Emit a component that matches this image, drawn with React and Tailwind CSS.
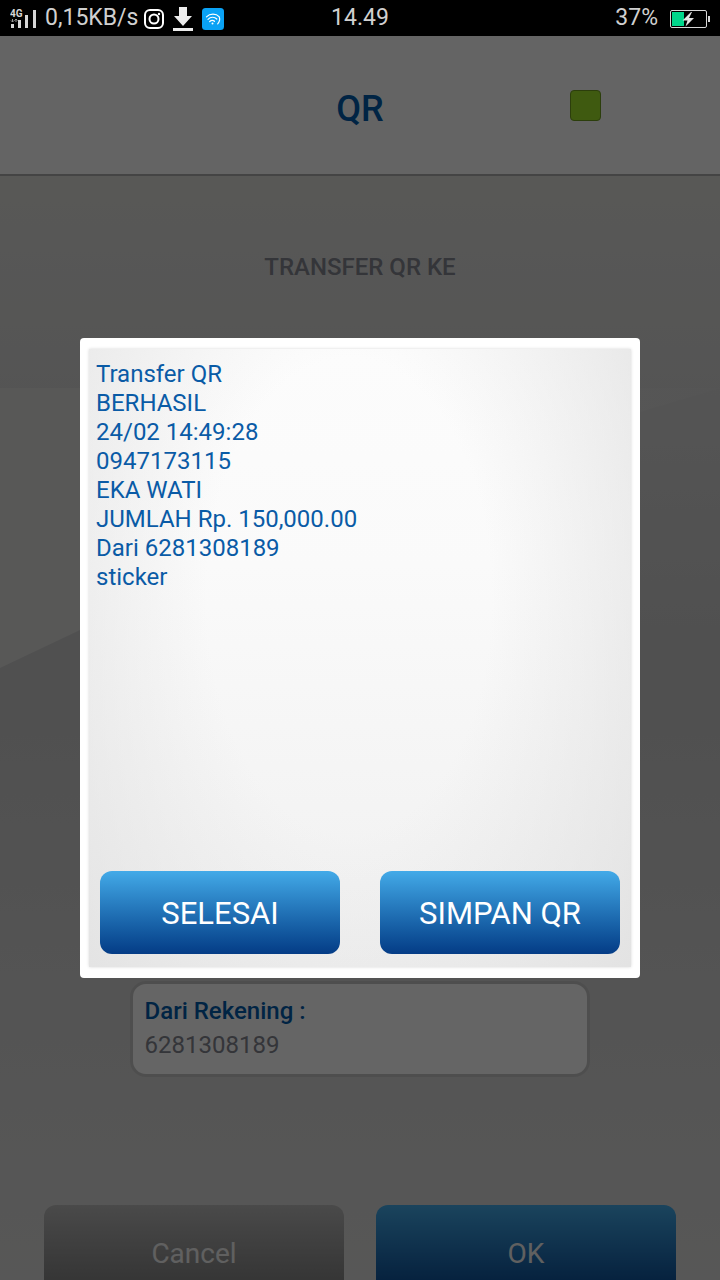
const receipt = [
  "Transfer QR",
  "BERHASIL",
  "24/02 14:49:28",
  "0947173115",
  "EKA WATI",
  "JUMLAH Rp. 150,000.00",
  "Dari 6281308189",
  "sticker",
];

function SignalIcon() {
  return (
    <svg width="27" height="24" viewBox="0 0 27 24" aria-hidden="true">
      <g fill="#d6d6d6">
        <rect x="1" y="17" width="3" height="4" />
        <rect x="8" y="13" width="3" height="8" />
        <rect x="15" y="8" width="3" height="13" />
        <rect x="23" y="3" width="3" height="18" />
      </g>
      <path d="M2.500 12v3M1 13.500l1.500 1.500 1.500-1.500M6 15v-3M4.500 13.500L6 12l1.500 1.500" fill="none" stroke="#9a9a9a" strokeWidth="1" />
      <text x="0" y="10" fontSize="10" fontWeight="700" fontFamily="Roboto, sans-serif" fill="#d6d6d6">4G</text>
    </svg>
  );
}

function CameraIcon() {
  return (
    <svg width="20" height="20" viewBox="0 0 20 20" fill="none" stroke="#fff" strokeWidth="2" aria-hidden="true">
      <rect x="1" y="1" width="18" height="18" rx="5" />
      <circle cx="10" cy="10" r="4.500" />
      <circle cx="15" cy="5" r="1.200" fill="#fff" stroke="none" />
    </svg>
  );
}

function DownloadIcon() {
  return (
    <svg width="20" height="24" viewBox="0 0 20 24" fill="#ececec" aria-hidden="true">
      <path d="M6 0h8v9h5l-9 10L1 9h5z" />
      <rect x="0" y="21" width="20" height="3" />
    </svg>
  );
}

function WifiIcon() {
  return (
    <svg width="22" height="22" viewBox="0 0 22 22" fill="none" aria-hidden="true">
      <rect width="22" height="22" rx="3.500" fill="#0aa2f5" />
      <g stroke="#fff" strokeWidth="1.200" strokeLinecap="round">
        <path d="M4.500 8.800C8 5.300 14 5.300 17.300 8.800c.8 2.700.2 5-1.600 7" />
        <path d="M6 11.300c2.700-2.700 6.500-2.700 8.800-.3" />
        <path d="M7.700 13.500c1.700-1.500 3.400-1.500 4.800-.2" />
      </g>
      <circle cx="10.500" cy="15.500" r="1" fill="#fff" />
    </svg>
  );
}

function BatteryIcon() {
  return (
    <svg width="40" height="18" viewBox="0 0 40 18" aria-hidden="true">
      <rect x=".5" y=".5" width="36" height="17" rx="1.500" fill="none" stroke="#d8d8d8" />
      <rect x="2" y="2" width="12" height="14" fill="#00d68b" />
      <path d="M21 2l-8.500 8.500h5L15.500 16.500 24 8h-5l3-6z" fill="#e4e4e4" />
      <rect x="38" y="6" width="2" height="6" fill="#d8d8d8" />
    </svg>
  );
}

function Backdrop() {
  return (
    <svg className="absolute inset-0 h-full w-full" viewBox="0 0 720 1104" preserveAspectRatio="none" aria-hidden="true">
      <defs>
        <linearGradient id="base" x1="0" y1="0" x2="0" y2="1">
          <stop offset="0" stopColor="#dcdcd8" />
          <stop offset=".2" stopColor="#d3d3d3" />
          <stop offset=".45" stopColor="#c7c7c7" />
          <stop offset=".75" stopColor="#d2d2d2" />
          <stop offset="1" stopColor="#dadad9" />
        </linearGradient>
        <linearGradient id="band" x1="0" y1="0" x2="1" y2="0">
          <stop offset="0" stopColor="#dcdcda" />
          <stop offset="1" stopColor="#d5d5d5" />
        </linearGradient>
      </defs>
      <rect width="720" height="1104" fill="url(#base)" />
      <path d="M0 212H720L640 236L80 454L0 492Z" fill="url(#band)" />
    </svg>
  );
}

export default function App() {
  return (
    <div className="flex h-screen flex-col overflow-hidden bg-black font-['Roboto',sans-serif]">
      <div className="grid h-9 shrink-0 grid-cols-[1fr_auto_1fr] items-center bg-black px-[10px] pt-px text-[23px] text-[#d0d0d0]">
        <div className="flex items-center gap-[6px]">
          <SignalIcon />
          <span className="ml-[2px]">0,15KB/s</span>
          <CameraIcon />
          <span className="mx-[3px]"><DownloadIcon /></span>
          <WifiIcon />
        </div>
        <span>14.49</span>
        <div className="flex items-center justify-end gap-3">
          <span>37%</span>
          <BatteryIcon />
        </div>
      </div>

      <div className="relative flex min-h-0 flex-1 flex-col overflow-hidden">
        <header className="grid h-[140px] shrink-0 grid-cols-3 items-center border-b-2 border-[#aaaaaa] bg-[#fafafa]">
          <h1 className="col-start-2 pt-2 text-center text-4xl font-medium text-[#005baa]">QR</h1>
          <span className="ml-[90px] size-[31px] rounded-sm border border-[#6f9c20] bg-[#9de128]" />
        </header>

        <main className="relative min-h-0 flex-1 overflow-hidden">
          <Backdrop />
          <div className="relative flex h-full flex-col items-center">
            <h2 className="mt-[75px] shrink-0 text-2xl leading-8 font-medium text-[#82848f]">TRANSFER QR KE</h2>
            <section className="mt-[698px] w-16/25 shrink-0 rounded-2xl border-3 border-[#c4c4c4] bg-[#fcfcfc] px-3 pt-[10px] pb-3 text-2xl leading-[34px]">
              <h3 className="font-medium text-[#005baa]">Dari Rekening :</h3>
              <p className="text-[#82848f]">6281308189</p>
            </section>
            <div className="mt-[128px] flex w-full shrink-0 gap-8 px-11 text-[28px] text-[#f0f0f0]">
              <button className="h-[98px] flex-1 rounded-xl bg-linear-to-b from-[#b8b8b8] to-[#787878]">Cancel</button>
              <button className="h-[98px] flex-1 rounded-xl bg-linear-to-b from-[#43aae8] to-[#053c86]">OK</button>
            </div>
          </div>
        </main>

        <div className="absolute inset-0 flex items-center justify-center bg-black/60">
          <div role="dialog" aria-label="Transfer QR" className="flex min-h-[640px] w-7/9 flex-col rounded-sm bg-white px-[9px] py-[11px]">
            <div className="flex flex-1 flex-col justify-between bg-[radial-gradient(ellipse_75%_110%_at_48%_40%,transparent_35%,#e0e0e0_100%),linear-gradient(to_bottom,#fcfcfc_0%,#fafafa_35%,#f0f0f0_100%)] px-[11px] pt-[11px] pb-[13px] shadow-[0_0_3px_#d8d8d8]">
              <div className="-ml-1 text-2xl leading-[29px] text-[#0a5ba6]">
                {receipt.map((line) => (
                  <p key={line}>{line}</p>
                ))}
              </div>
              <div className="flex gap-10 text-[31px] text-white">
                <button className="h-[83px] flex-1 rounded-xl bg-linear-to-b from-[#43aae8] to-[#053c86] pt-1">SELESAI</button>
                <button className="h-[83px] flex-1 rounded-xl bg-linear-to-b from-[#43aae8] to-[#053c86] pt-1">SIMPAN QR</button>
              </div>
            </div>
          </div>
        </div>
      </div>
    </div>
  );
}
